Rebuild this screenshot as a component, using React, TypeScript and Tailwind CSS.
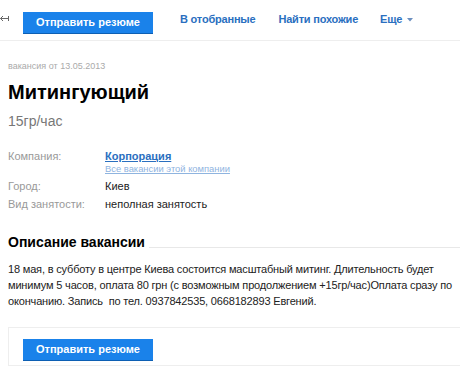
import React from "react";

const SendButton: React.FC = () => (
  <button className="h-[21px] w-[130px] bg-[#1a82ea] text-white text-[11px] font-bold leading-[21px] shadow-[0_1px_0_#0d5fb3]">
    Отправить резюме
  </button>
);

const App: React.FC = () => {
  return (
    <div className="w-[460px] h-[372px] overflow-hidden bg-white font-['Liberation_Sans',Arial,sans-serif] text-[#222]">
      {/* Top action bar */}
      <div className="relative h-[41px] border-b border-[#eeeeee] flex items-start pt-[9px]">
        <svg className="absolute left-0 top-[15px]" width="9" height="7" viewBox="0 0 9 7">
          <path d="M0.5 3.5H8M0.5 3.5L3 1M0.5 3.5L3 6M8.5 1V6" stroke="#666" strokeWidth="1" fill="none" />
        </svg>
        <div className="ml-[23px]">
          <SendButton />
        </div>
        <div className="flex items-center h-[21px] text-[11px] font-bold text-[#2a6fbf] tracking-[-0.2px]">
          <span className="ml-[27px]">В отобранные</span>
          <span className="ml-[23px]">Найти похожие</span>
          <span className="ml-[22px] flex items-center">
            Еще
            <svg className="ml-[5px]" width="6" height="4" viewBox="0 0 6 4">
              <path d="M0 0H6L3 3.5Z" fill="#6c8fbf" />
            </svg>
          </span>
        </div>
      </div>

      {/* Vacancy header */}
      <div className="pl-[8px]">
        <div className="mt-[20px] text-[9px] leading-[11px] text-[#aaa]">вакансия от 13.05.2013</div>
        <h1 className="mt-[8px] text-[20px] leading-[24px] font-bold text-black">Митингующий</h1>
        <div className="mt-[9px] text-[14px] leading-[17px] text-[#777]">15гр/час</div>

        <div className="mt-[19px] grid grid-cols-[97px_1fr] gap-y-[4px] text-[11px] leading-[14px]">
          <div className="text-[#999]">Компания:</div>
          <div>
            <div className="font-bold text-[#2a6fbf] underline">Корпорация</div>
            <div className="text-[9.4px] leading-[12px] text-[#8fb4df] underline">Все вакансии этой компании</div>
          </div>
          <div className="text-[#999]">Город:</div>
          <div className="text-[#222]">Киев</div>
          <div className="text-[#999]">Вид занятости:</div>
          <div className="text-[#222]">неполная занятость</div>
        </div>

        {/* Description */}
        <div className="mt-[22px] flex items-center">
          <h2 className="text-[14px] leading-[18px] font-bold text-black whitespace-nowrap">Описание вакансии</h2>
          <div className="flex-1 ml-[4px] mt-[11px] border-t border-[#e8e8e8]" />
        </div>
        <p className="mt-[10px] w-[452px] text-[11px] leading-[16px] tracking-[-0.17px] text-[#222]">
          18 мая, в субботу в центре Киева состоится масштабный митинг. Длительность будет минимум 5 часов, оплата 80 грн (с возможным продолжением +15гр/час)Оплата сразу по окончанию. Запись&nbsp; по тел. 0937842535, 0668182893 Евгений.
        </p>
      </div>

      {/* Bottom action box */}
      <div className="mt-[18px] ml-[8px] w-[470px] h-[39px] border border-[#eeeeee] pl-[14px] pt-[8px]">
        <SendButton />
      </div>
    </div>
  );
};

export default App;
